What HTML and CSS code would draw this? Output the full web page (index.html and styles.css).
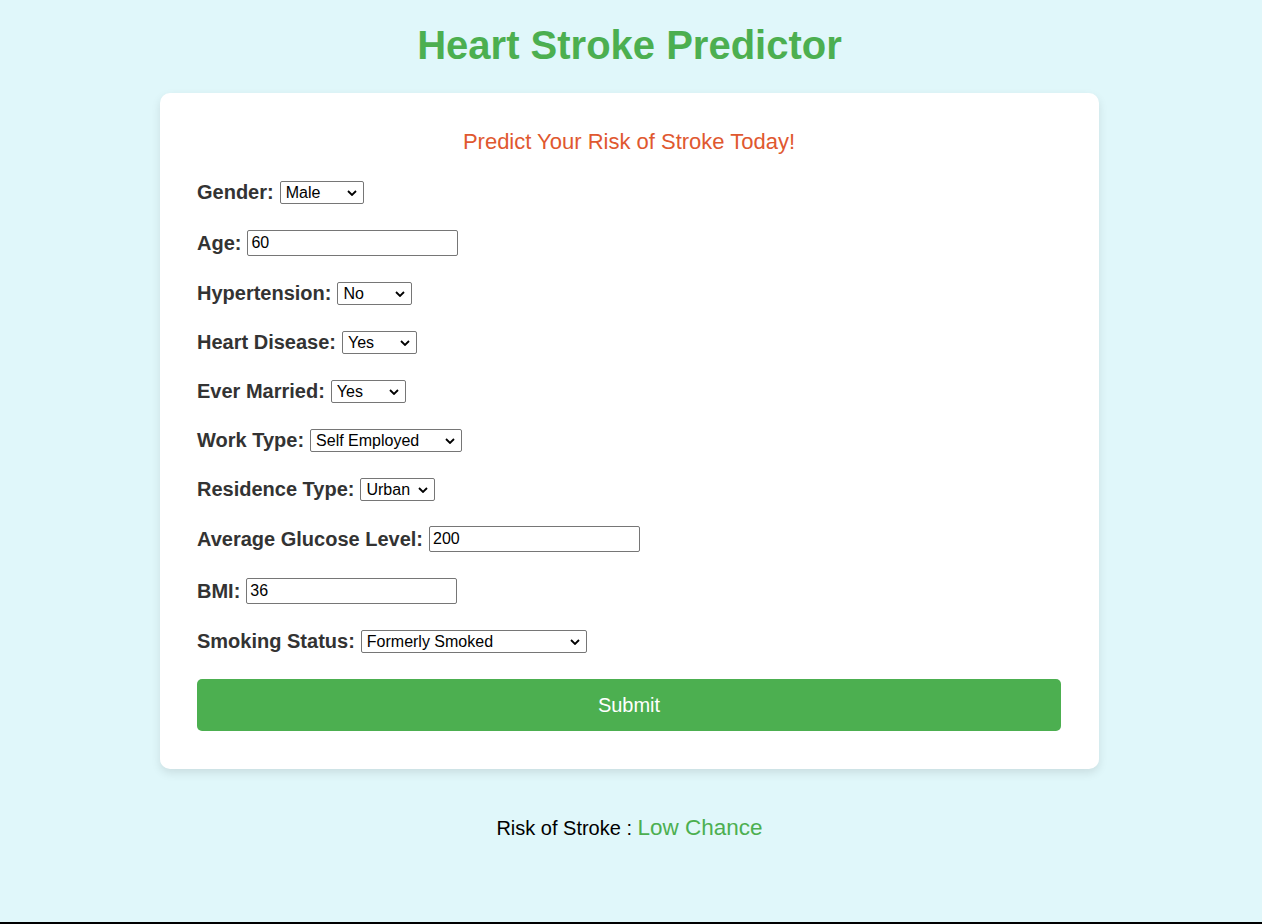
FILE: index.html
```html
<!DOCTYPE html>
<html lang="en">
<head>
<meta charset="utf-8">
<title>Heart Stroke Predictor</title>
<link rel="stylesheet" href="styles.css">
</head>
<body>
  <h1 class="title">Heart Stroke Predictor</h1>
  <div class="card">
    <h2 class="subtitle">Predict Your Risk of Stroke Today!</h2>
    <form class="form">
      <div class="row">
        <label class="label">Gender:</label>
        <select class="sel sel-gender"><option>Male</option><option>Female</option></select>
      </div>
      <div class="row">
        <label class="label">Age:</label>
        <input class="inp" type="text" value="60">
      </div>
      <div class="row">
        <label class="label">Hypertension:</label>
        <select class="sel sel-sm"><option>No</option><option>Yes</option></select>
      </div>
      <div class="row">
        <label class="label">Heart Disease:</label>
        <select class="sel sel-sm"><option>Yes</option><option>No</option></select>
      </div>
      <div class="row">
        <label class="label">Ever Married:</label>
        <select class="sel sel-sm"><option>Yes</option><option>No</option></select>
      </div>
      <div class="row">
        <label class="label">Work Type:</label>
        <select class="sel sel-work"><option>Self Employed</option><option>Private</option><option>Govt Job</option></select>
      </div>
      <div class="row row-tight">
        <label class="label">Residence Type:</label>
        <select class="sel sel-sm"><option>Urban</option><option>Rural</option></select>
      </div>
      <div class="row">
        <label class="label">Average Glucose Level:</label>
        <input class="inp" type="text" value="200">
      </div>
      <div class="row">
        <label class="label">BMI:</label>
        <input class="inp" type="text" value="36">
      </div>
      <div class="row">
        <label class="label">Smoking Status:</label>
        <select class="sel sel-smoke"><option>Formerly Smoked</option><option>Never Smoked</option><option>Smokes</option></select>
      </div>
      <button class="submit" type="button">Submit</button>
    </form>
  </div>
  <div class="result">Risk of Stroke : <span class="result-value">Low Chance</span></div>
  <div class="footer-line"></div>
</body>
</html>
```

FILE: styles.css
```css
html, body {
  margin: 0;
  padding: 0;
}
body {
  background: #e0f7fa;
  font-family: Arial, "Liberation Sans", sans-serif;
  min-height: 100vh;
  padding-right: 3px;
  box-sizing: border-box;
  display: flex;
  flex-direction: column;
  align-items: center;
}
.title {
  margin: 23px 0 25px;
  font-size: 40px;
  font-weight: bold;
  color: #4caf50;
  line-height: 45px;
}
.card {
  width: 939px;
  box-sizing: border-box;
  background: #fff;
  border-radius: 10px;
  box-shadow: 0 4px 10px rgba(0, 0, 0, 0.1);
  padding: 36px 38px 38px 37px;
}
.subtitle {
  margin: 0 0 27px;
  text-align: center;
  font-size: 22px;
  font-weight: normal;
  line-height: 25px;
  color: #e0582f;
}
.form {
  display: flex;
  flex-direction: column;
}
.row {
  display: flex;
  align-items: center;
  gap: 6px;
  margin-bottom: 26px;
}
.row-tight {
  margin-bottom: 25px;
}
.label {
  font-size: 20px;
  font-weight: bold;
  color: #333;
  line-height: 23px;
}
.sel {
  appearance: none;
  -webkit-appearance: none;
  box-sizing: border-box;
  height: 23px;
  border: 1px solid #767676;
  border-radius: 2px;
  background: #fff url("data:image/svg+xml,%3Csvg xmlns='http://www.w3.org/2000/svg' width='10' height='6' viewBox='0 0 10 6'%3E%3Cpath d='M1 1l4 4 4-4' fill='none' stroke='%23000' stroke-width='1.8'/%3E%3C/svg%3E") no-repeat right 6px center;
  font-family: Arial, "Liberation Sans", sans-serif;
  font-size: 16px;
  color: #000;
  padding: 0 20px 0 5px;
  line-height: 21px;
}
.sel-gender { width: 84px; }
.sel-sm { width: 75px; }
.sel-work { width: 152px; }
.sel-smoke { width: 226px; }
.inp {
  box-sizing: border-box;
  width: 211px;
  height: 26px;
  border: 1px solid #767676;
  border-radius: 2px;
  padding: 0 3px;
  font-family: Arial, "Liberation Sans", sans-serif;
  font-size: 16px;
  color: #000;
  background: #fff;
}
.submit {
  height: 52px;
  border: none;
  border-radius: 5px;
  background: #4caf50;
  color: #fff;
  font-family: Arial, "Liberation Sans", sans-serif;
  font-size: 20px;
  cursor: pointer;
}
.result {
  margin-top: 46px;
  font-size: 20px;
  color: #000;
}
.result-value {
  font-size: 22.5px;
  color: #4caf50;
}
.footer-line {
  margin-top: auto;
  align-self: stretch;
  margin-right: -3px;
  border-top: 2px solid #000;
}
```
